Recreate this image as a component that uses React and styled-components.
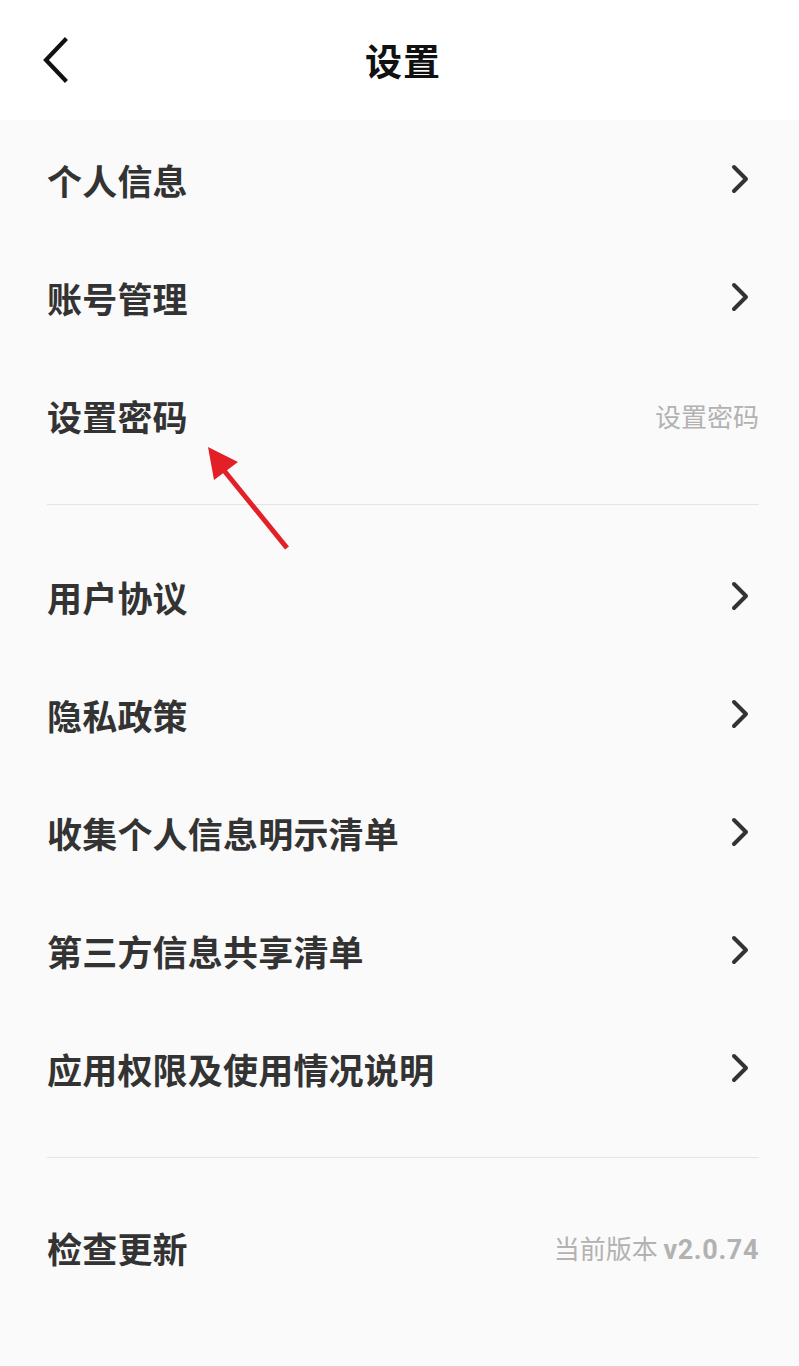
import React from 'react'
import styled, { createGlobalStyle } from 'styled-components'

const GlobalStyle = createGlobalStyle`
  html, body {
    margin: 0;
    padding: 0;
    background: #fafafa;
  }
  body {
    font-family: 'Noto Sans CJK SC', 'Noto Sans', sans-serif;
  }
`

const Page = styled.div`
  position: relative;
  width: 799px;
  min-height: 1366px;
  background: #fafafa;
`

const Header = styled.header`
  height: 120px;
  background: #fff;
  display: flex;
  align-items: center;
  justify-content: center;
  padding-left: 7px;
  position: relative;
`

const BackButton = styled.button`
  position: absolute;
  left: 38px;
  top: 34px;
  width: 34px;
  height: 52px;
  border: 0;
  padding: 0;
  background: transparent;
  display: flex;
  align-items: center;
  justify-content: center;
`

const Title = styled.h1`
  margin: 0;
  font-size: 37px;
  font-weight: 700;
  color: #111;
  letter-spacing: 1px;
`

const Section = styled.div`
  display: flex;
  flex-direction: column;
`

const Row = styled.div`
  height: 118px;
  display: flex;
  align-items: center;
  justify-content: space-between;
  padding: 0 48px 0 47px;
`

const Label = styled.span`
  font-size: 35px;
  font-weight: 700;
  color: #333;
  letter-spacing: 0.2px;
`

const Hint = styled.span`
  font-size: 26px;
  color: #b2b2b2;
  font-weight: 400;
  margin-right: -8px;

  b {
    font-family: 'Roboto', 'Noto Sans', sans-serif;
    font-weight: 700;
    font-size: 27px;
    letter-spacing: 0.6px;
  }
`

const Divider = styled.hr`
  border: 0;
  height: 1px;
  background: #e4e4e4;
  margin: ${(p) => p.$top}px 40px ${(p) => p.$bottom}px 47px;
`

const Pointer = styled.svg`
  position: absolute;
  left: 200px;
  top: 440px;
`

const Chevron = () => (
  <svg width="20" height="30" viewBox="0 0 20 30">
    <path d="M3 3 L15 15 L3 27" fill="none" stroke="#333" strokeWidth="4" strokeLinecap="round" strokeLinejoin="round" />
  </svg>
)

const items1 = [
  { label: '个人信息' },
  { label: '账号管理' },
  { label: '设置密码', hint: '设置密码' },
]

const items2 = ['用户协议', '隐私政策', '收集个人信息明示清单', '第三方信息共享清单', '应用权限及使用情况说明']

export default function App() {
  return (
    <Page>
      <GlobalStyle />
      <Header>
        <BackButton aria-label="返回">
          <svg width="28" height="46" viewBox="0 0 28 46">
            <path d="M24 3 L5 23 L24 43" fill="none" stroke="#111" strokeWidth="4.2" strokeLinecap="square" />
          </svg>
        </BackButton>
        <Title>设置</Title>
      </Header>

      <Section>
        {items1.map((it) => (
          <Row key={it.label}>
            <Label>{it.label}</Label>
            {it.hint ? <Hint>{it.hint}</Hint> : <Chevron />}
          </Row>
        ))}
      </Section>

      <Divider $top={30} $bottom={32} />

      <Section>
        {items2.map((label) => (
          <Row key={label}>
            <Label>{label}</Label>
            <Chevron />
          </Row>
        ))}
      </Section>

      <Divider $top={30} $bottom={30} />

      <Section>
        <Row>
          <Label>检查更新</Label>
          <Hint>
            当前版本 <b>v2.0.74</b>
          </Hint>
        </Row>
      </Section>

      <Pointer width="100" height="120" viewBox="0 0 100 120">
        <line x1="22" y1="28" x2="87" y2="108" stroke="#e32028" strokeWidth="5" />
        <polygon points="8,7 38,22 14,40" fill="#e32028" />
      </Pointer>
    </Page>
  )
}
